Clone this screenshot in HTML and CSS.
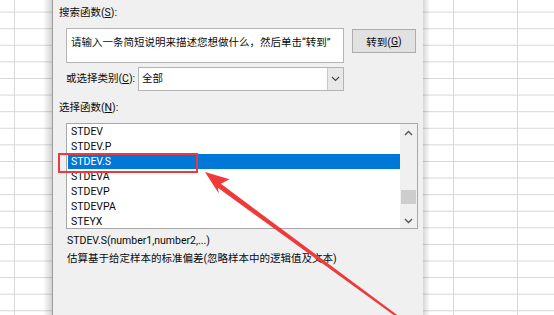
FILE: index.html
```html
<!DOCTYPE html>
<html lang="zh-CN">
<head>
<meta charset="utf-8">
<title>插入函数</title>
<link rel="stylesheet" href="styles.css">
</head>
<body>
<div class="screen">
  <div class="sheet sheet-left"></div>
  <div class="dialog">
    <div class="label top-label">搜索函数(<u>S</u>):</div>
    <div class="search-row">
      <div class="search-box">请输入一条简短说明来描述您想做什么，然后单击“转到”</div>
      <div class="btn">转到(<u>G</u>)</div>
    </div>
    <div class="cat-row">
      <div class="label cat-label">或选择类别(<u>C</u>):</div>
      <div class="combo">
        <span class="combo-text">全部</span>
        <span class="combo-btn"><svg width="9" height="6" viewBox="0 0 9 6"><path d="M1 1 L4.5 4.5 L8 1" fill="none" stroke="#444" stroke-width="1.1"/></svg></span>
      </div>
    </div>
    <div class="label list-label">选择函数(<u>N</u>):</div>
    <div class="listbox">
      <ul class="items">
        <li>STDEV</li>
        <li>STDEV.P</li>
        <li class="sel">STDEV.S</li>
        <li>STDEVA</li>
        <li>STDEVP</li>
        <li>STDEVPA</li>
        <li>STEYX</li>
      </ul>
      <div class="scrollbar">
        <svg class="sb-arrow" width="9" height="6" viewBox="0 0 9 6"><path d="M1 5 L4.5 1.5 L8 5" fill="none" stroke="#555" stroke-width="1.4"/></svg>
        <div class="sb-track"><div class="sb-thumb"></div></div>
        <svg class="sb-arrow" width="9" height="6" viewBox="0 0 9 6"><path d="M1 1 L4.5 4.5 L8 1" fill="none" stroke="#555" stroke-width="1.4"/></svg>
      </div>
    </div>
    <div class="desc">
      <div>STDEV.S(number1,number2,...)</div>
      <div>估算基于给定样本的标准偏差(忽略样本中的逻辑值及文本)</div>
    </div>
  </div>
  <div class="sheet sheet-right"></div>

  <div class="highlight"></div>
  <svg class="arrow" width="554" height="315" viewBox="0 0 554 315">
    <polygon points="205,172 218.8,193.6 217.9,187.8 404.4,322.8 405.6,321.2 220.9,183.8 229.6,179.2" fill="#f03a3a"/>
  </svg>
</div>
</body>
</html>
```

FILE: styles.css
```css
* { box-sizing: border-box; margin: 0; padding: 0; }
html, body { width: 554px; height: 315px; overflow: hidden; background: #fff; }
body {
  font-family: Roboto, "Noto Sans CJK SC", sans-serif;
  font-size: 10.5px;
  color: #0a0a0a;
}
u { text-decoration: underline; text-underline-offset: 1px; }

.screen {
  position: relative;
  display: flex;
  width: 554px;
  height: 315px;
}

.sheet {
  height: 315px;
  background-color: #fff;
}
.sheet-left {
  width: 53px;
  background-image:
    linear-gradient(to right, rgba(0,0,0,0), rgba(0,0,0,0.17)),
    linear-gradient(to right, transparent 14px, #d9d9d9 14px, #d9d9d9 15px, transparent 15px),
    repeating-linear-gradient(to bottom, transparent 0, transparent 15.6px, #d6d6d6 15.6px, #d6d6d6 16.6px);
  background-size: 9px 100%, 100% 100%, 100% 16.6px;
  background-position: right top, 0 0, 0 -4px;
  background-repeat: no-repeat, no-repeat, repeat;
  border-right: 1px solid #9c9c9c;
}
.sheet-right {
  flex: 1;
  background-image:
    linear-gradient(to right, rgba(0,0,0,0.16), rgba(0,0,0,0)),
    linear-gradient(to right, transparent 30px, #d9d9d9 30px, #d9d9d9 31px, transparent 31px, transparent 94px, #d9d9d9 94px, #d9d9d9 95px, transparent 95px),
    repeating-linear-gradient(to bottom, transparent 0, transparent 15.6px, #d6d6d6 15.6px, #d6d6d6 16.6px);
  background-size: 7px 100%, 100% 100%, 100% 16.6px;
  background-position: left top, 0 0, 0 -4px;
  background-repeat: no-repeat, no-repeat, repeat;
}

.dialog {
  width: 370px;
  height: 315px;
  background: #f0f0f0;
  padding-top: 5px;
  display: flex;
  flex-direction: column;
}
.label { line-height: 16px; white-space: nowrap; }
.top-label { padding-left: 6px; }

.search-row {
  display: flex;
  align-items: flex-start;
  margin-top: 7px;
  padding-left: 13px;
}
.search-box {
  width: 278px;
  height: 35px;
  background: #fff;
  border: 1px solid #b4b4b4;
  padding: 6px 0 0 4px;
  line-height: 15px;
  white-space: nowrap;
  overflow: hidden;
}
.btn {
  margin-left: 8px;
  margin-top: 1px;
  width: 64px;
  height: 24px;
  background: #e1e1e1;
  border: 1px solid #adadad;
  display: flex;
  align-items: center;
  justify-content: center;
}

.cat-row {
  display: flex;
  align-items: center;
  margin-top: 4px;
  padding-left: 13px;
}
.cat-label { width: 72px; }
.combo {
  width: 206px;
  height: 24px;
  background: #fff;
  border: 1px solid #b4b4b4;
  display: flex;
  align-items: stretch;
}
.combo-text { flex: 1; padding-left: 3px; line-height: 22px; }
.combo-btn {
  width: 16px;
  background: #e8e8e8;
  border-left: 1px solid #c8c8c8;
  display: flex;
  align-items: center;
  justify-content: center;
}

.list-label { margin-top: 9px; padding-left: 6px; }

.listbox {
  margin-top: 7px;
  margin-left: 13px;
  width: 352px;
  height: 106px;
  background: #fff;
  border: 1px solid #a8a8a8;
  display: flex;
  overflow: hidden;
}
.items {
  list-style: none;
  flex: 1;
  padding-left: 1px;
}
.items li {
  height: 15px;
  line-height: 15px;
  padding-left: 3px;
  white-space: nowrap;
}
.items li.sel { background: #0078d7; color: #fff; }

.scrollbar {
  width: 17px;
  background: #f0f0f0;
  display: flex;
  flex-direction: column;
  align-items: center;
  padding: 6px 0 4px;
}
.sb-arrow { flex: none; }
.sb-track {
  flex: 1;
  width: 100%;
  padding: 0 1px 14px;
  display: flex;
  flex-direction: column;
  justify-content: flex-end;
}
.sb-thumb { height: 14px; background: #cdcdcd; }

.desc {
  margin-top: 3px;
  padding-left: 14px;
  line-height: 18px;
}

.highlight {
  position: absolute;
  left: 58px;
  top: 153px;
  width: 140px;
  height: 20px;
  border: 2px solid #ea3a3f;
}
.arrow {
  position: absolute;
  left: 0;
  top: 0;
}
```
